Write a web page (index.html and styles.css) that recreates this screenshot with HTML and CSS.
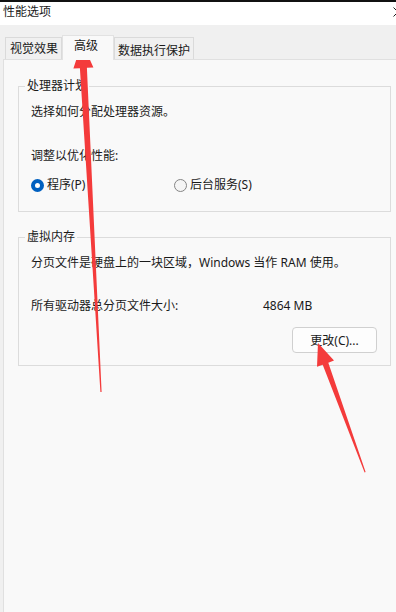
FILE: index.html
```html
<!DOCTYPE html>
<html lang="zh-CN">
<head>
    <meta charset="UTF-8">
    <meta name="viewport" content="width=device-width, initial-scale=1.0">
    <title>性能选项</title>
    <link rel="stylesheet" href="styles.css">
</head>
<body>
    <div class="topline"></div>
    <div class="titlebar">
        <span class="title">性能选项</span>
        <svg class="close" width="10" height="10" viewBox="0 0 10 10"><path d="M0.5 0.5L9.5 9.5M9.5 0.5L0.5 9.5" stroke="#1a1a1a" stroke-width="1"/></svg>
    </div>
    <div class="tabs">
        <div class="tab tab-visual">视觉效果</div>
        <div class="tab tab-active">高级</div>
        <div class="tab tab-dep">数据执行保护</div>
    </div>
    <div class="panel">
        <!-- 处理器计划 -->
        <fieldset class="group group-cpu">
            <legend>处理器计划</legend>
            <div class="line">选择如何分配处理器资源。</div>
            <div class="line line-gap">调整以优化性能:</div>
            <div class="radios">
                <label class="radio"><span class="dot checked"></span>程序(P)</label>
                <label class="radio"><span class="dot"></span>后台服务(S)</label>
            </div>
        </fieldset>
        <!-- 虚拟内存 -->
        <fieldset class="group group-mem">
            <legend>虚拟内存</legend>
            <div class="line">分页文件是硬盘上的一块区域，Windows 当作 RAM 使用。</div>
            <div class="line size-row">
                <span>所有驱动器总分页文件大小:</span>
                <span>4864 MB</span>
            </div>
            <div class="btn-row">
                <button class="btn">更改(C)...</button>
            </div>
        </fieldset>
    </div>

    <!-- 红色标注箭头 -->
    <svg class="marks" width="396" height="612" viewBox="0 0 396 612">
        <polygon points="82,42 93.4,67.5 86.9,67.8 101.6,392 100.4,392 79.9,68.2 73.4,68.5" fill="#f43b3b"/>
        <polygon points="318,343 334,360.6 328.3,362.7 365.6,472 364.6,472.4 322.7,364.8 317,366.8" fill="#f43b3b"/>
    </svg>
</body>
</html>
```

FILE: styles.css
```css
html, body{
    margin: 0;
    height: 612px;
}
body{
    position: relative;
    overflow: hidden;
    display: flex;
    flex-direction: column;
    background: #f0f0f0;
    color: #1a1a1a;
    font-family: "Noto Sans", "Noto Sans CJK SC", sans-serif;
    font-size: 12px;
}
.topline{
    height: 2px;
    background: #111;
}
.titlebar{
    height: 23px;
    background: #fff;
    display: flex;
    justify-content: space-between;
    align-items: flex-start;
    overflow: hidden;
}
.title{
    padding-left: 3px;
    line-height: 20px;
}
.close{
    margin: 5px -7px 0 0;
}
/* 选项卡 */
.tabs{
    height: 34px;
    display: flex;
    align-items: flex-end;
    padding-left: 5px;
    box-sizing: border-box;
}
.tab{
    box-sizing: border-box;
    height: 22px;
    line-height: 22px;
    text-align: center;
    border: 1px solid #dadada;
    border-bottom: none;
    background: #f0f0f0;
}
.tab-visual{
    width: 57px;
    padding-left: 1px;
}
.tab-active{
    width: 52px;
    height: 25px;
    line-height: 20px;
    margin-bottom: -1px;
    background: #f9f9f9;
    border-color: #e2e2e2;
    position: relative;
    z-index: 1;
    padding-right: 4px;
}
.tab-dep{
    width: 80px;
    padding-top: 2px;
    line-height: 21px;
}
/* 内容面板 */
.panel{
    flex: 1;
    margin-left: 3px;
    border-left: 1px solid #e0e0e0;
    border-top: 1px solid #e0e0e0;
    background: #f9f9f9;
    padding: 18px 5px 0 14px;
}
.group{
    margin: 0;
    padding: 0 0 0 12px;
    border: 1px solid #dcdcdc;
    min-width: 0;
}
.group legend{
    margin-left: -6px;
    padding: 0 2px;
    line-height: 16px;
}
.group-cpu{
    padding-top: 9px;
    padding-bottom: 17px;
}
.group-mem{
    margin-top: 17px;
    padding-top: 9px;
    padding-bottom: 12px;
}
.line{
    height: 18px;
    line-height: 18px;
    white-space: nowrap;
}
.line-gap{
    margin-top: 26px;
}
.radios{
    margin-top: 11px;
    display: grid;
    grid-template-columns: 143px auto;
    height: 18px;
    line-height: 18px;
}
.radio{
    display: flex;
    align-items: center;
}
.dot{
    box-sizing: border-box;
    width: 13px;
    height: 13px;
    border-radius: 50%;
    border: 1px solid #858585;
    background: #f5f5f5;
    margin-right: 3px;
}
.dot.checked{
    border: 4px solid #0060c0;
    background: #fff;
}
.size-row{
    margin-top: 25px;
    display: grid;
    grid-template-columns: 232px auto;
}
.btn-row{
    margin-top: 12px;
    display: flex;
    justify-content: flex-end;
    padding-right: 13px;
}
.btn{
    width: 85px;
    height: 26px;
    border: 1px solid #d0d0d0;
    border-radius: 4px;
    background: #fdfdfd;
    font: inherit;
    color: #1a1a1a;
    padding: 0;
}
/* 标注 */
.marks{
    position: absolute;
    left: 0;
    top: 0;
    pointer-events: none;
}
```
